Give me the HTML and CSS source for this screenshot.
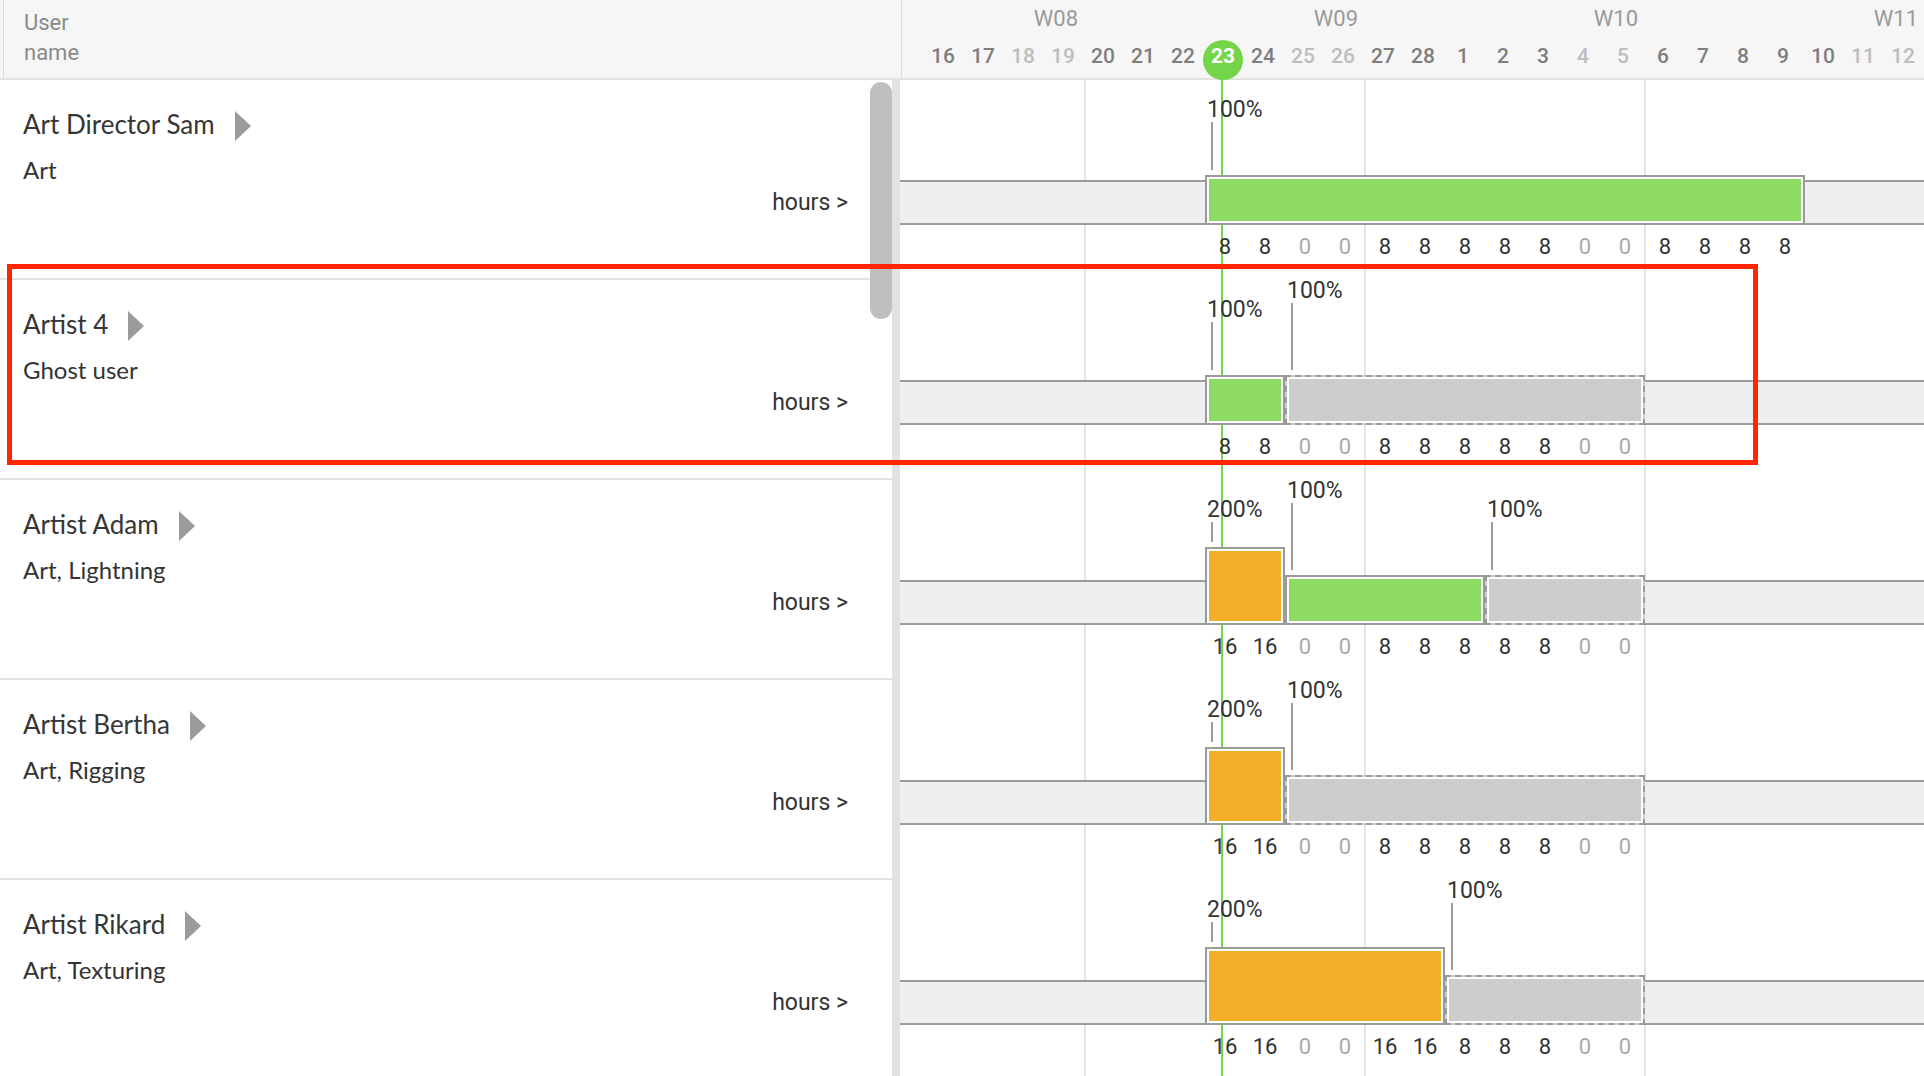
FILE: index.html
```html
<!DOCTYPE html>
<html>
<head>
<meta charset="utf-8">
<link rel="stylesheet" href="styles.css">
</head>
<body>
<div class="page">
  <div class="head">
    <div class="head-left"><div class="head-title">User<br>name</div></div>
    <div class="head-right">
      <div class="weeks">
        <span class="wk wk-first">W08</span><span class="wk">W09</span><span class="wk">W10</span><span class="wk">W11</span>
      </div>
      <div class="days">
        <span class="day">16</span><span class="day">17</span><span class="day we">18</span><span class="day we">19</span><span class="day">20</span><span class="day">21</span><span class="day">22</span><span class="day today-day">23</span><span class="day">24</span><span class="day we">25</span><span class="day we">26</span><span class="day">27</span><span class="day">28</span><span class="day">1</span><span class="day">2</span><span class="day">3</span><span class="day we">4</span><span class="day we">5</span><span class="day">6</span><span class="day">7</span><span class="day">8</span><span class="day">9</span><span class="day">10</span><span class="day we">11</span><span class="day we">12</span>
      </div>
    </div>
  </div>

  <div class="main">
    <div class="main-left">
      <div class="rows">
        <div class="urow">
          <div class="uname-line"><span class="uname">Art Director Sam</span><span class="tri"></span></div>
          <div class="usub">Art</div>
          <div class="uhours">hours &gt;</div>
        </div>
        <div class="urow">
          <div class="uname-line"><span class="uname">Artist 4</span><span class="tri"></span></div>
          <div class="usub">Ghost user</div>
          <div class="uhours">hours &gt;</div>
        </div>
        <div class="urow">
          <div class="uname-line"><span class="uname">Artist Adam</span><span class="tri"></span></div>
          <div class="usub">Art, Lightning</div>
          <div class="uhours">hours &gt;</div>
        </div>
        <div class="urow">
          <div class="uname-line"><span class="uname">Artist Bertha</span><span class="tri"></span></div>
          <div class="usub">Art, Rigging</div>
          <div class="uhours">hours &gt;</div>
        </div>
        <div class="urow">
          <div class="uname-line"><span class="uname">Artist Rikard</span><span class="tri"></span></div>
          <div class="usub">Art, Texturing</div>
          <div class="uhours">hours &gt;</div>
        </div>
      </div>
      <div class="gutter"></div>
      <div class="thumb"></div>
    </div>

    <div class="main-right">
      <div class="gridline g1"></div>
      <div class="gridline g2"></div>
      <div class="gridline g3"></div>
      <div class="today"></div>

      <!-- Row 1 -->
      <div class="trow">
        <div class="band"></div>
        <div class="lbl lv0 to100" style="left:307px"><span class="ltxt">100%</span><span class="tick"></span></div>
        <div class="bar p100 green" style="left:305px;width:600px"></div>
        <div class="nums"><span>8</span><span>8</span><span class="z">0</span><span class="z">0</span><span>8</span><span>8</span><span>8</span><span>8</span><span>8</span><span class="z">0</span><span class="z">0</span><span>8</span><span>8</span><span>8</span><span>8</span></div>
      </div>

      <!-- Row 2 -->
      <div class="trow">
        <div class="band"></div>
        <div class="lbl lv0 to100" style="left:307px"><span class="ltxt">100%</span><span class="tick"></span></div>
        <div class="lbl lv1 to100" style="left:387px"><span class="ltxt">100%</span><span class="tick"></span></div>
        <div class="bar p100 green" style="left:305px;width:80px"></div>
        <div class="bar p100 ghost" style="left:385px;width:360px"></div>
        <div class="nums"><span>8</span><span>8</span><span class="z">0</span><span class="z">0</span><span>8</span><span>8</span><span>8</span><span>8</span><span>8</span><span class="z">0</span><span class="z">0</span></div>
      </div>

      <!-- Row 3 -->
      <div class="trow">
        <div class="band"></div>
        <div class="lbl lv0 to200" style="left:307px"><span class="ltxt">200%</span><span class="tick"></span></div>
        <div class="lbl lv1 to100" style="left:387px"><span class="ltxt">100%</span><span class="tick"></span></div>
        <div class="lbl lv0 to100" style="left:587px"><span class="ltxt">100%</span><span class="tick"></span></div>
        <div class="bar p200 orange" style="left:305px;width:80px"></div>
        <div class="bar p100 green" style="left:385px;width:200px"></div>
        <div class="bar p100 ghost" style="left:585px;width:160px"></div>
        <div class="nums"><span>16</span><span>16</span><span class="z">0</span><span class="z">0</span><span>8</span><span>8</span><span>8</span><span>8</span><span>8</span><span class="z">0</span><span class="z">0</span></div>
      </div>

      <!-- Row 4 -->
      <div class="trow">
        <div class="band"></div>
        <div class="lbl lv0 to200" style="left:307px"><span class="ltxt">200%</span><span class="tick"></span></div>
        <div class="lbl lv1 to100" style="left:387px"><span class="ltxt">100%</span><span class="tick"></span></div>
        <div class="bar p200 orange" style="left:305px;width:80px"></div>
        <div class="bar p100 ghost" style="left:385px;width:360px"></div>
        <div class="nums"><span>16</span><span>16</span><span class="z">0</span><span class="z">0</span><span>8</span><span>8</span><span>8</span><span>8</span><span>8</span><span class="z">0</span><span class="z">0</span></div>
      </div>

      <!-- Row 5 -->
      <div class="trow">
        <div class="band"></div>
        <div class="lbl lv0 to200" style="left:307px"><span class="ltxt">200%</span><span class="tick"></span></div>
        <div class="lbl lv1 to100" style="left:547px"><span class="ltxt">100%</span><span class="tick"></span></div>
        <div class="bar p200 orange" style="left:305px;width:240px"></div>
        <div class="bar p100 ghost" style="left:545px;width:200px"></div>
        <div class="nums"><span>16</span><span>16</span><span class="z">0</span><span class="z">0</span><span>16</span><span>16</span><span>8</span><span>8</span><span>8</span><span class="z">0</span><span class="z">0</span></div>
      </div>
    </div>
  </div>

  <div class="highlight"></div>
</div>
</body>
</html>
```

FILE: styles.css
```css
html, body {
  margin: 0;
  padding: 0;
  background: #ffffff;
  font-family: Roboto, "Liberation Sans", sans-serif;
}

.page {
  position: relative;
  width: 1924px;
  height: 1076px;
  overflow: hidden;
}

/* ---------- header ---------- */
.head {
  display: flex;
  height: 80px;
  box-sizing: border-box;
  background: #f6f6f6;
  border-bottom: 2px solid #e2e2e2;
}

.head-left {
  width: 902px;
  box-sizing: border-box;
  padding-left: 3px;
  border-right: 1px solid #dcdcdc;
}

.head-title {
  height: 100%;
  box-sizing: border-box;
  border-left: 1px solid #dcdcdc;
  padding: 8px 0 0 20px;
  font-size: 22px;
  line-height: 30px;
  color: #8a8a8a;
}

.head-right {
  width: 1022px;
}

.weeks {
  display: flex;
  height: 40px;
  box-sizing: border-box;
  padding-top: 4px;
}

.wk {
  width: 280px;
  flex: none;
  text-align: right;
  font-size: 22px;
  line-height: 30px;
  color: #9a9a9a;
}

.wk-first {
  width: 176px;
}

.days {
  display: flex;
  padding-left: 21px;
  height: 40px;
}

.day {
  width: 40px;
  height: 40px;
  flex: none;
  text-align: center;
  font-size: 21px;
  font-weight: 500;
  line-height: 32px;
  color: #7e7e7e;
}

.day.we {
  color: #bdbdbd;
}

.day.today-day {
  background: #74d54a;
  border-radius: 50%;
  color: #ffffff;
  font-weight: 700;
}

/* ---------- main ---------- */
.main {
  display: flex;
  height: 996px;
  overflow: hidden;
}

.main-left {
  position: relative;
  width: 900px;
  display: flex;
  flex: none;
}

.rows {
  width: 892px;
}

.gutter {
  width: 8px;
  background: #e2e2e2;
}

.thumb {
  position: absolute;
  left: 870px;
  top: 2px;
  width: 22px;
  height: 237px;
  border-radius: 11px;
  background: #bfbfbf;
}

.urow {
  height: 200px;
  box-sizing: border-box;
  border-bottom: 2px solid #e3e3e3;
  padding: 29px 44px 0 23px;
  color: #333333;
}

.uname-line {
  display: flex;
  align-items: flex-start;
}

.uname {
  font-family: Lato, "Open Sans", sans-serif;
  font-size: 26px;
  line-height: 30px;
  color: #363636;
}

.tri {
  width: 0;
  height: 0;
  margin: 2px 0 0 20px;
  border-left: 16px solid #9b9b9b;
  border-top: 15px solid transparent;
  border-bottom: 15px solid transparent;
}

.usub {
  margin-top: 16px;
  font-family: Lato, "Open Sans", sans-serif;
  font-size: 24px;
  line-height: 26px;
  color: #333333;
}

.uhours {
  margin-top: 7px;
  text-align: right;
  font-size: 23px;
  line-height: 26px;
  color: #333333;
}

/* ---------- timeline ---------- */
.main-right {
  position: relative;
  width: 1024px;
  flex: none;
}

.gridline {
  position: absolute;
  top: 0;
  bottom: 0;
  width: 2px;
  background: #e4e4e4;
}

.g1 { left: 184px; }
.g2 { left: 464px; }
.g3 { left: 744px; }

.today {
  position: absolute;
  top: 0;
  bottom: 0;
  left: 321px;
  width: 2px;
  background: #74d54a;
  z-index: 1;
}

.trow {
  position: relative;
  height: 200px;
  box-sizing: border-box;
  padding-top: 100px;
}

.band {
  position: relative;
  height: 45px;
  box-sizing: border-box;
  border-top: 2px solid #9b9b9b;
  border-bottom: 2px solid #9b9b9b;
  background: #eeeff1;
}

.bar {
  position: absolute;
  bottom: 55px;
  box-sizing: border-box;
  border: 2px solid #9a9a9a;
  box-shadow: inset 0 0 0 2px #ffffff;
  z-index: 2;
}

.p100 { height: 50px; }
.p200 { height: 78px; }

.green { background: #8edb63; }
.orange { background: #f4ae29; }
.ghost {
  background: #cdcdcd;
  border-style: dashed;
}

.lbl {
  position: absolute;
  display: flex;
  flex-direction: column;
  z-index: 2;
}

.lv0 { top: 18px; }
.lv1 { top: -1px; }
.lv0.to100 { height: 72px; }
.lv0.to200 { height: 44px; }
.lv1.to100 { height: 91px; }

.ltxt {
  font-size: 23px;
  line-height: 24px;
  color: #333333;
  white-space: nowrap;
}

.tick {
  flex: 1;
  width: 2px;
  margin-left: 4px;
  background: #9a9a9a;
}

.nums {
  position: absolute;
  top: 155px;
  left: 305px;
  display: flex;
  z-index: 2;
}

.nums span {
  width: 40px;
  text-align: center;
  font-size: 22px;
  line-height: 24px;
  color: #333333;
}

.nums span.z {
  color: #a9a9a9;
}

/* ---------- annotation ---------- */
.highlight {
  position: absolute;
  left: 7px;
  top: 264px;
  width: 1751px;
  height: 201px;
  box-sizing: border-box;
  border: 5px solid #ff2600;
  z-index: 10;
  pointer-events: none;
}
```
